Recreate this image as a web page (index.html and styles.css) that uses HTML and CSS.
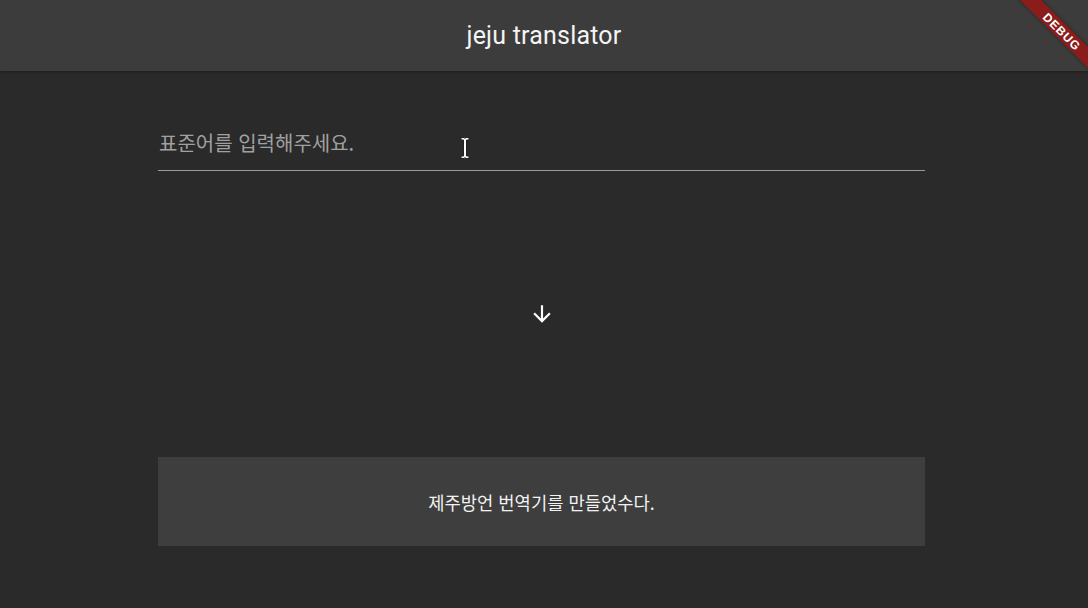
FILE: index.html
```html
<!DOCTYPE html>
<html lang="ko">
<head>
<meta charset="utf-8">
<title>jeju translator</title>
<link rel="stylesheet" href="styles.css">
</head>
<body>
<div class="app">
  <header class="appbar">
    <h1 class="title">jeju translator</h1>
  </header>
  <main class="content">
    <div class="field">
      <span class="placeholder">표준어를 입력해주세요.</span>
    </div>
    <div class="arrow-row">
      <svg class="arrow" width="26" height="26" viewBox="0 0 24 24"><path fill="#ffffff" d="M20 12l-1.41-1.41L13 16.17V4h-2v12.17l-5.58-5.59L4 12l8 8 8-8z"/></svg>
    </div>
    <div class="result">제주방언 번역기를 만들었수다.</div>
  </main>
  <svg class="cursor" width="12" height="24" viewBox="0 0 12 24"><path d="M2 1.5h3l1 1 1-1h3v2.5h-2.5v16h2.5v2.5h-3l-1-1-1 1h-3v-2.5h2.5v-16h-2.5z" fill="#fff" stroke="#222" stroke-width="1"/></svg>
  <div class="banner"><span>DEBUG</span></div>
</div>
</body>
</html>
```
FILE: styles.css
```css
html, body {
  margin: 0;
  padding: 0;
  background: #2a2a2a;
}
.app {
  position: relative;
  width: 1088px;
  height: 608px;
  overflow: hidden;
  background: #2a2a2a;
  font-family: "Noto Sans CJK KR", Roboto, sans-serif;
}
.appbar {
  height: 71px;
  background: #3c3c3c;
  display: flex;
  align-items: center;
  justify-content: center;
  box-shadow: 0 1px 3px rgba(0,0,0,0.35);
}
.title {
  margin: 0;
  font-family: Roboto, "Noto Sans", sans-serif;
  font-weight: 400;
  font-size: 25px;
  color: #f4f4f4;
  letter-spacing: 0.2px;
}
.content {
  width: 767px;
  margin-left: 158px;
  padding-top: 44px;
  display: flex;
  flex-direction: column;
}
.field {
  height: 55px;
  border-bottom: 1px solid #9a9a9a;
  display: flex;
  align-items: center;
  padding-left: 1px;
}
.placeholder {
  font-size: 20px;
  color: #a0a0a0;
  line-height: 1;
}
.arrow-row {
  height: 286px;
  display: flex;
  align-items: center;
  justify-content: center;
}
.arrow {
  display: block;
}
.result {
  height: 89px;
  background: #3e3e3e;
  display: flex;
  align-items: center;
  justify-content: center;
  color: #f2f2f2;
  font-size: 17.7px;
}
.cursor {
  position: absolute;
  left: 459px;
  top: 136px;
}
.banner {
  position: absolute;
  top: 24px;
  left: 1002px;
  width: 120px;
  height: 15px;
  background: #8a1c1c;
  transform: rotate(45deg);
  display: flex;
  align-items: center;
  justify-content: center;
  box-shadow: 0 0 4px rgba(0,0,0,0.4);
}
.banner span {
  font-family: "Liberation Sans", sans-serif;
  font-weight: 700;
  font-size: 12px;
  color: #ffffff;
  letter-spacing: 0.8px;
  line-height: 1;
}
```
